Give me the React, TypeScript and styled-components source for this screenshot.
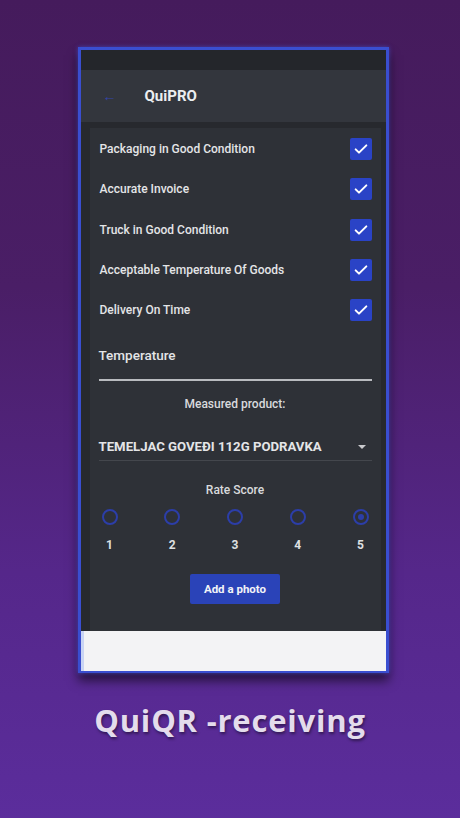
import React from 'react';
import styled, { createGlobalStyle } from 'styled-components';

const GlobalStyle = createGlobalStyle`
  html, body {
    margin: 0;
    padding: 0;
  }
  body {
    font-family: Roboto, "Liberation Sans", sans-serif;
  }
`;

const Page = styled.div`
  width: 460px;
  height: 818px;
  background: linear-gradient(180deg, #451b5c 0%, #4a1e66 35%, #55278a 70%, #5b2d9c 100%);
  display: flex;
  flex-direction: column;
  align-items: center;
  padding-top: 47px;
  box-sizing: border-box;
  overflow: hidden;
`;

const Phone = styled.div`
  width: 311px;
  margin-left: 6px;
  border: 3px solid #3a4ed0;
  border-bottom-width: 2px;
  box-sizing: border-box;
  box-shadow: 0 0 4px rgba(70, 90, 230, 0.6), 0 8px 10px rgba(0, 0, 0, 0.55);
  display: flex;
  flex-direction: column;
`;

const StatusBar = styled.div`
  height: 20px;
  background: #24262b;
`;

const AppBar = styled.div`
  height: 52px;
  background: #33363d;
  display: flex;
  align-items: center;
  padding-left: 22px;
  gap: 28px;
`;

const BackArrow = styled.span`
  color: #3345a8;
  font-size: 14px;
  line-height: 1;
`;

const Title = styled.h1`
  margin: 0;
  color: #eceef0;
  font-size: 15px;
  font-weight: 700;
`;

const Content = styled.div`
  background: #27292e;
  padding: 6px 5px 0 9px;
`;

const Card = styled.div`
  background: #2e3137;
  padding: 1px 9px 27px 9px;
  display: flex;
  flex-direction: column;
  color: #e4e5e7;
`;

const CheckRow = styled.div`
  height: 40.3px;
  display: flex;
  align-items: center;
  justify-content: space-between;
  font-size: 12px;
  font-weight: 500;
  padding-left: 1px;
`;

const CheckBox = styled.span`
  width: 22px;
  height: 22px;
  border-radius: 2px;
  background: #2a43c6;
  display: flex;
  align-items: center;
  justify-content: center;
`;

const TextField = styled.div`
  padding: 17px 0 16px;
  border-bottom: 2px solid #b9bbbf;
  font-size: 13.5px;
  font-weight: 500;
  line-height: 16px;
`;

const Caption = styled.div<{ $top: number }>`
  margin-top: ${p => p.$top}px;
  text-align: center;
  font-size: 12px;
  font-weight: 500;
  line-height: 16px;
  color: #d9dadd;
`;

const Select = styled.div`
  margin-top: 27px;
  padding-bottom: 5px;
  border-bottom: 1px solid #44474d;
  display: flex;
  align-items: center;
  justify-content: space-between;
  font-size: 13.2px;
  font-weight: 700;
  line-height: 16px;
  padding-right: 6px;
`;

const Caret = styled.span`
  width: 0;
  height: 0;
  border-left: 4px solid transparent;
  border-right: 4px solid transparent;
  border-top: 4px solid #c9cacd;
`;

const RadioRow = styled.div`
  margin-top: 11px;
  display: flex;
  justify-content: space-between;
`;

const RadioCol = styled.div`
  width: 22px;
  display: flex;
  flex-direction: column;
  align-items: center;
  gap: 12px;
`;

const Radio = styled.span<{ $checked?: boolean }>`
  width: 12px;
  height: 12px;
  border-radius: 50%;
  border: 2px solid #2c3ea8;
  display: flex;
  align-items: center;
  justify-content: center;

  &::after {
    content: '';
    width: 6px;
    height: 6px;
    border-radius: 50%;
    background: ${p => (p.$checked ? '#2c3ea8' : 'transparent')};
  }
`;

const RadioLabel = styled.span`
  font-size: 12px;
  font-weight: 700;
  line-height: 16px;
  color: #dfe0e2;
`;

const PhotoButton = styled.button`
  margin: 21px auto 0;
  width: 90px;
  height: 30px;
  border: none;
  border-radius: 2px;
  background: #2a43b8;
  color: #f2f3f7;
  font-family: Roboto, "Liberation Sans", sans-serif;
  font-size: 11.5px;
  font-weight: 700;
`;

const Footer = styled.div`
  height: 40px;
  background: #f3f3f5;
  border-left: 3px solid #c9d4f4;
`;

const Headline = styled.div`
  margin-top: 26px;
  font-family: "Open Sans", "DejaVu Sans", sans-serif;
  font-size: 31px;
  font-weight: 700;
  letter-spacing: 0.8px;
  color: #e4dcec;
  text-shadow: 1px 2px 3px rgba(0, 0, 0, 0.45);
`;

const checks = [
  'Packaging in Good Condition',
  'Accurate Invoice',
  'Truck in Good Condition',
  'Acceptable Temperature Of Goods',
  'Delivery On Time',
];

const Check = () => (
  <svg width="16" height="16" viewBox="0 0 24 24">
    <path d="M4 12.5l5 5L20 6.5" fill="none" stroke="#fff" strokeWidth="3" strokeLinecap="round" strokeLinejoin="round" />
  </svg>
);

const App: React.FC = () => {
  return (
    <Page>
      <GlobalStyle />
      <Phone>
        <StatusBar />
        <AppBar>
          <BackArrow>←</BackArrow>
          <Title>QuiPRO</Title>
        </AppBar>
        <Content>
          <Card>
            {checks.map(c => (
              <CheckRow key={c}>
                <span>{c}</span>
                <CheckBox><Check /></CheckBox>
              </CheckRow>
            ))}
            <TextField>Temperature</TextField>
            <Caption $top={15}>Measured product:</Caption>
            <Select>
              <span>TEMELJAC GOVEĐI 112G PODRAVKA</span>
              <Caret />
            </Select>
            <Caption $top={21}>Rate Score</Caption>
            <RadioRow>
              {[1, 2, 3, 4, 5].map(n => (
                <RadioCol key={n}>
                  <Radio $checked={n === 5} />
                  <RadioLabel>{n}</RadioLabel>
                </RadioCol>
              ))}
            </RadioRow>
            <PhotoButton>Add a photo</PhotoButton>
          </Card>
        </Content>
        <Footer />
      </Phone>
      <Headline>QuiQR -receiving</Headline>
    </Page>
  );
};

export default App;
